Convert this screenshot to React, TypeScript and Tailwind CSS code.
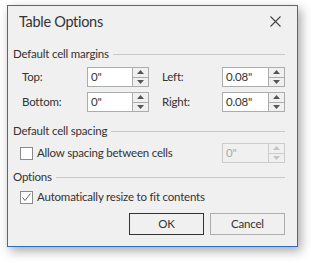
import React from "react";

const font = { fontFamily: 'Lato, "Segoe UI", sans-serif' };

function Arrow({ up, color = "#555" }: { up?: boolean; color?: string }) {
  return (
    <svg width="7" height="4" viewBox="0 0 7 4">
      {up ? <polygon points="0,4 7,4 3.5,0" fill={color} /> : <polygon points="0,0 7,0 3.5,4" fill={color} />}
    </svg>
  );
}

function Spin({ value, disabled }: { value: string; disabled?: boolean }) {
  const border = disabled ? "border-[#cccccc]" : "border-[#acacac]";
  return (
    <div className={`flex h-[20px] border ${border} ${disabled ? "bg-[#f0f0f0]" : "bg-white"}`}>
      <div className={`flex-1 flex items-center pl-[3px] text-[11.5px] tracking-[-0.2px] ${disabled ? "text-[#a8a8a8]" : "text-[#333]"}`}>
        {value}
      </div>
      <div className={`w-[16px] flex flex-col border-l ${border} bg-[#f0f0f0]`}>
        <div className={`flex-1 flex items-center justify-center border-b ${border}`}>
          <Arrow up color={disabled ? "#c4c4c4" : "#555"} />
        </div>
        <div className="flex-1 flex items-center justify-center">
          <Arrow color={disabled ? "#c4c4c4" : "#555"} />
        </div>
      </div>
    </div>
  );
}

function Header({ text }: { text: string }) {
  return (
    <div className="flex items-center h-[16px] gap-[4px]">
      <span className="text-[11.5px] tracking-[-0.2px] text-[#333] whitespace-nowrap">{text}</span>
      <div className="flex-1 h-px bg-[#c8c8c8]" />
    </div>
  );
}

function Check({ checked }: { checked?: boolean }) {
  return (
    <div className="w-[13px] h-[13px] border border-[#8a8a8a] bg-white flex items-center justify-center">
      {checked && (
        <svg width="11" height="11" viewBox="0 0 11 11">
          <polyline points="1.5,5.5 4,8.5 9.5,1.5" fill="none" stroke="#666" strokeWidth="1" />
        </svg>
      )}
    </div>
  );
}

export default function App() {
  return (
    <div className="w-[311px] h-[263px] bg-white pt-[5px] pl-[7px]" style={font}>
      <div className="w-[291px] h-[242px] border border-[#2b6fc0] bg-[#f0f0f0] shadow-[3px_4px_10px_rgba(0,0,0,0.35)] flex flex-col">
        {/* title bar */}
        <div className="h-[31px] flex items-center justify-between pl-[11px] pr-[16px]">
          <span className="text-[14.5px] tracking-[-0.3px] text-[#333]">Table Options</span>
          <svg width="11" height="11" viewBox="0 0 11 11">
            <path d="M0.5 0.5 L10.5 10.5 M10.5 0.5 L0.5 10.5" stroke="#444" strokeWidth="1.1" />
          </svg>
        </div>

        <div className="flex flex-col pl-[5px] pr-[12px] mt-[9px]">
          <Header text="Default cell margins" />
          <div className="grid grid-cols-[65px_62px_13px_60px_63px] gap-y-[5px] mt-[5px] pl-[9px] text-[11.5px] tracking-[-0.2px] text-[#333]">
            <div className="flex items-center">Top:</div>
            <Spin value={'0"'} />
            <div />
            <div className="flex items-center">Left:</div>
            <Spin value={'0.08"'} />
            <div className="flex items-center">Bottom:</div>
            <Spin value={'0"'} />
            <div />
            <div className="flex items-center">Right:</div>
            <Spin value={'0.08"'} />
          </div>

          <div className="mt-[11px]">
            <Header text="Default cell spacing" />
          </div>
          <div className="flex items-center mt-[4px] pl-[7px]">
            <Check />
            <span className="ml-[4px] text-[11.5px] tracking-[-0.2px] text-[#333] flex-1">Allow spacing between cells</span>
            <div className="w-[63px]">
              <Spin value={'0"'} disabled />
            </div>
          </div>

          <div className="mt-[6px]">
            <Header text="Options" />
          </div>
          <div className="flex items-center mt-[4px] pl-[7px] h-[16px]">
            <Check checked />
            <span className="ml-[4px] text-[11.5px] tracking-[-0.2px] text-[#333]">Automatically resize to fit contents</span>
          </div>

          <div className="flex justify-end gap-[6px] mt-[8px]">
            <button className="w-[75px] h-[22px] border border-[#333] bg-[#f0f0f0] text-[11.5px] tracking-[-0.2px] text-[#333]">OK</button>
            <button className="w-[75px] h-[22px] border border-[#adadad] bg-[#f0f0f0] text-[11.5px] tracking-[-0.2px] text-[#333]">Cancel</button>
          </div>
        </div>
      </div>
    </div>
  );
}
